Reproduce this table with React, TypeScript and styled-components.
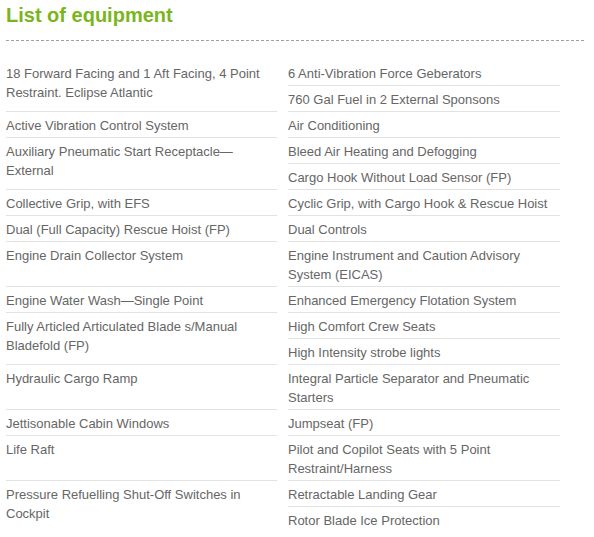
import React from "react";
import styled, { createGlobalStyle } from "styled-components";

const GlobalStyle = createGlobalStyle`
  html, body {
    margin: 0;
    padding: 0;
    background: #ffffff;
  }
  body {
    font-family: "Liberation Sans", Arial, sans-serif;
  }
`;

const Page = styled.div`
  padding: 3px 10px 0 6px;
  width: 578px;
`;

const Title = styled.h2`
  margin: 0;
  font-family: "Liberation Sans", Arial, sans-serif;
  font-size: 20px;
  line-height: 24px;
  font-weight: bold;
  color: #7ab51d;
`;

const Divider = styled.div`
  margin-top: 13px;
  border-top: 1px dashed #a0a0a0;
`;

const Table = styled.div`
  margin-top: 19px;
  display: grid;
  grid-template-columns: 271px 272px;
  column-gap: 11px;
  align-items: stretch;
`;

const Cell = styled.div<{ $col: number; $row: number; $span: number; $last?: boolean }>`
  grid-column: ${(p) => p.$col};
  grid-row: ${(p) => p.$row} / span ${(p) => p.$span};
  padding: 4px 0 2px;
  font-size: 13px;
  line-height: 19px;
  color: #666666;
  border-bottom: 1px solid ${(p) => (p.$last ? "transparent" : "#e2e2e2")};
`;

type Item = { text: string; span?: number };

const left: Item[] = [
  { text: "18 Forward Facing and 1 Aft Facing, 4 Point Restraint. Eclipse Atlantic", span: 2 },
  { text: "Active Vibration Control System" },
  { text: "Auxiliary Pneumatic Start Receptacle\u2014External", span: 2 },
  { text: "Collective Grip, with EFS" },
  { text: "Dual (Full Capacity) Rescue Hoist (FP)" },
  { text: "Engine Drain Collector System" },
  { text: "Engine Water Wash\u2014Single Point" },
  { text: "Fully Articled Articulated Blade s/Manual Bladefold (FP)", span: 2 },
  { text: "Hydraulic Cargo Ramp" },
  { text: "Jettisonable Cabin Windows" },
  { text: "Life Raft" },
  { text: "Pressure Refuelling Shut-Off Switches in Cockpit", span: 2 },
];

const right: Item[] = [
  { text: "6 Anti-Vibration Force Geberators" },
  { text: "760 Gal Fuel in 2 External Sponsons" },
  { text: "Air Conditioning" },
  { text: "Bleed Air Heating and Defogging" },
  { text: "Cargo Hook Without Load Sensor (FP)" },
  { text: "Cyclic Grip, with Cargo Hook & Rescue Hoist" },
  { text: "Dual Controls" },
  { text: "Engine Instrument and Caution Advisory System (EICAS)" },
  { text: "Enhanced Emergency Flotation System" },
  { text: "High Comfort Crew Seats" },
  { text: "High Intensity strobe lights" },
  { text: "Integral Particle Separator and Pneumatic Starters" },
  { text: "Jumpseat (FP)" },
  { text: "Pilot and Copilot Seats with 5 Point Restraint/Harness" },
  { text: "Retractable Landing Gear" },
  { text: "Rotor Blade Ice Protection" },
];

function buildCells() {
  const cells: React.ReactNode[] = [];
  let li = 0;
  let leftBusyUntil = 0;
  for (let row = 0; row < right.length; row++) {
    if (row >= leftBusyUntil && li < left.length) {
      const it = left[li];
      const span = it.span ?? 1;
      cells.push(
        <Cell
          key={"l" + li}
          $col={1}
          $row={row + 1}
          $span={span}
          $last={li === left.length - 1}
        >
          {it.text}
        </Cell>
      );
      leftBusyUntil = row + span;
      li++;
    }
    cells.push(
      <Cell
        key={"r" + row}
        $col={2}
        $row={row + 1}
        $span={1}
        $last={row === right.length - 1}
      >
        {right[row].text}
      </Cell>
    );
  }
  return cells;
}

export default function App() {
  return (
    <>
      <GlobalStyle />
      <Page>
        <Title>List of equipment</Title>
        <Divider />
        <Table>{buildCells()}</Table>
      </Page>
    </>
  );
}
